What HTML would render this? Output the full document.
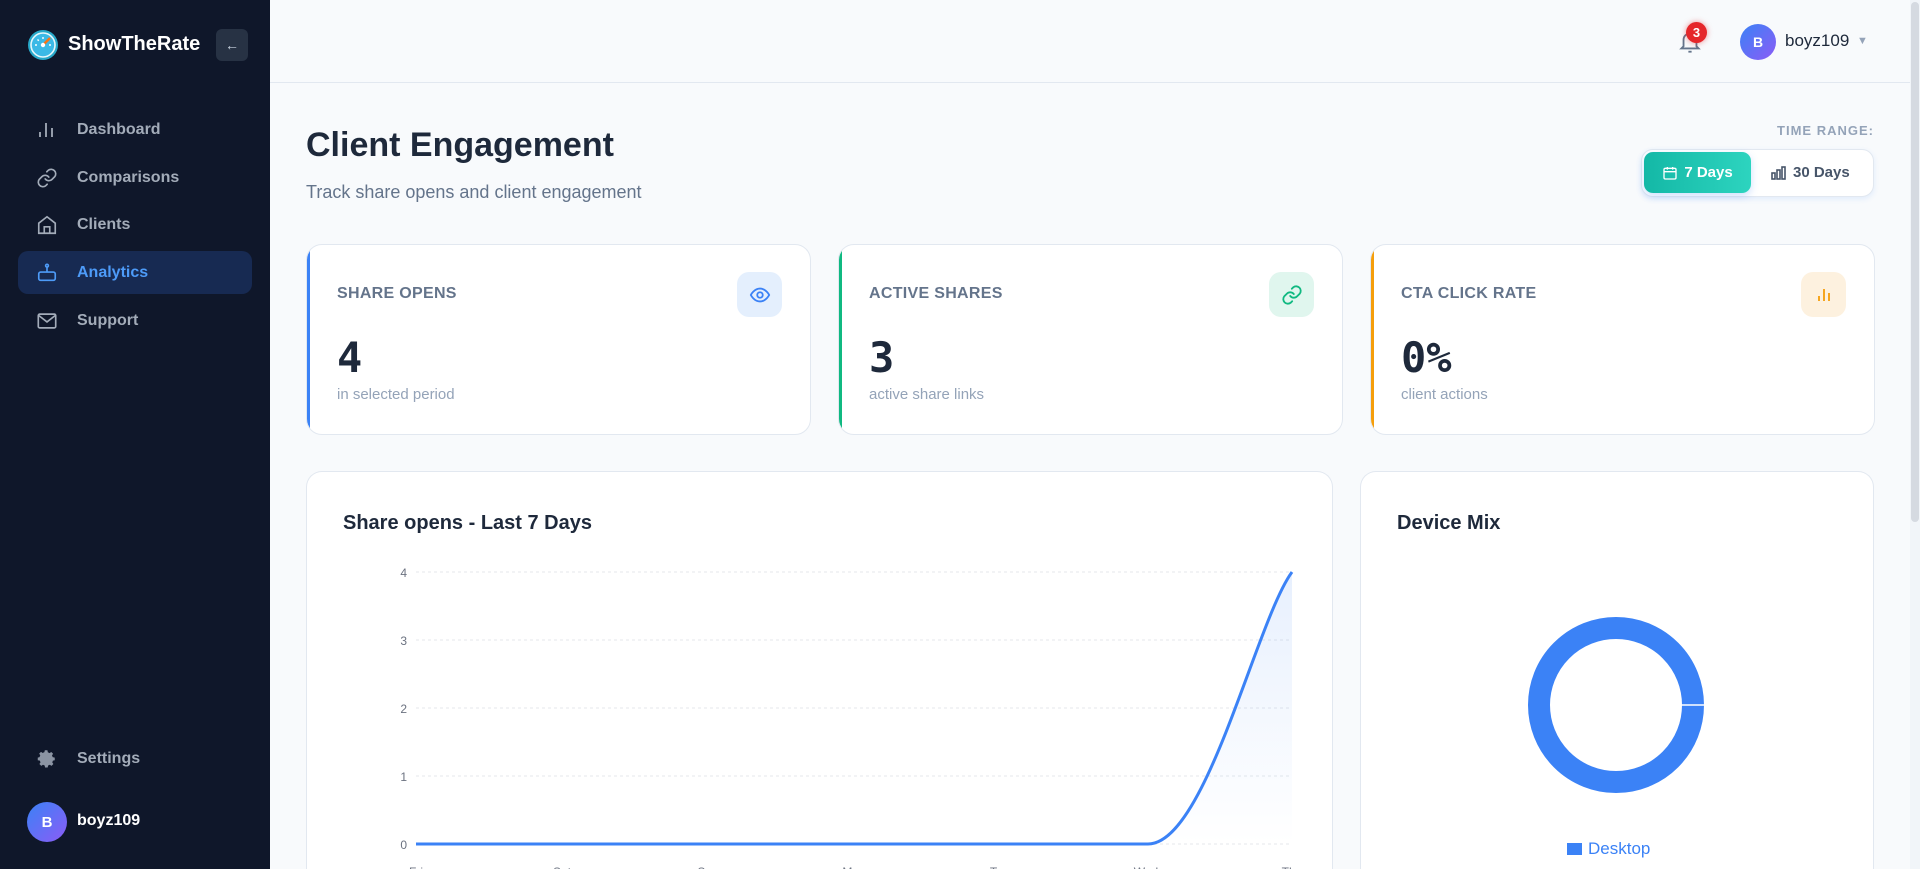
<!DOCTYPE html>
<html style="overflow:hidden;height:869px"><head><meta charset="utf-8"><style>
*{box-sizing:border-box;margin:0;padding:0}
body{width:1920px;height:869px;overflow:hidden;background:#f8fafc;font-family:"Liberation Sans",sans-serif;position:relative}
.sb{position:absolute;left:0;top:0;width:270px;height:869px;background:#0f172a}
.abs{position:absolute}
.nav{position:absolute;left:18px;width:234px;height:43px;border-radius:10px;display:flex;align-items:center;color:#a3acb9;font-size:16px;font-weight:bold}
.nav svg{position:absolute;left:18px}
.nav span{position:absolute;left:59px}
.card{position:absolute;top:244px;height:191px;width:505px;background:#fff;border:1px solid #e2e8f0;border-radius:16px;overflow:hidden}
.card .bar{position:absolute;left:0;top:0;bottom:0;width:3px}
.lbl{position:absolute;left:30px;top:40px;font-size:16px;font-weight:bold;color:#64748b;letter-spacing:.3px}
.num{position:absolute;left:30px;top:88px;font-size:42px;font-weight:bold;color:#1e293b;font-family:"DejaVu Sans Mono","Liberation Mono",monospace}
.sub{position:absolute;left:30px;top:141px;font-size:15px;color:#94a3b8}
.ib{position:absolute;right:28px;top:27px;width:45px;height:45px;border-radius:12px;display:flex;align-items:center;justify-content:center}
</style></head><body>
<div class="sb">
  <svg class="abs" style="left:27px;top:29px" width="32" height="32" viewBox="0 0 32 32"><circle cx="16" cy="16" r="15" fill="#27a8c9"/><circle cx="16" cy="16" r="12" fill="#3bb9e6"/><circle cx="16" cy="16" r="12" fill="none" stroke="#e6f7fb" stroke-width="1.6"/><path d="M16 16 L23 9" stroke="#f97316" stroke-width="2.5"/><circle cx="16" cy="16" r="2.2" fill="#fff"/><path d="M8 16h2M22 16h2M16 8v2M10.5 10.5l1.3 1.3" stroke="#fff" stroke-width="1.4"/></svg>
  <div class="abs" style="left:68px;top:33px;color:#fff;font-size:20px;font-weight:bold">ShowTheRate</div>
  <div class="abs" style="left:216px;top:29px;width:32px;height:32px;border-radius:6px;background:#273244;color:#cbd5e1;font-size:14px;display:flex;align-items:center;justify-content:center">←</div>
  <div class="nav" style="top:108px"><svg width="20" height="20" viewBox="0 0 20 20" fill="none" stroke="#a3acb9" stroke-width="1.8"><path d="M4 17v-5M10 17V3M16 17V8"/></svg><span>Dashboard</span></div>
  <div class="nav" style="top:156px"><svg width="22" height="22" viewBox="0 0 24 24" fill="none" stroke="#a3acb9" stroke-width="1.8" stroke-linecap="round"><path d="M10 13a5 5 0 0 0 7.5.5l3-3a5 5 0 0 0-7-7l-1.7 1.7"/><path d="M14 11a5 5 0 0 0-7.5-.5l-3 3a5 5 0 0 0 7 7l1.7-1.7"/></svg><span>Comparisons</span></div>
  <div class="nav" style="top:203px"><svg width="22" height="22" viewBox="0 0 24 24" fill="none" stroke="#a3acb9" stroke-width="1.8"><path d="M3 10l9-7 9 7v11H3z"/><path d="M9 21v-7h6v7"/></svg><span>Clients</span></div>
  <div class="nav" style="top:251px;background:#172a52;color:#4d9bf8"><svg width="22" height="22" viewBox="0 0 24 24" fill="none" stroke="#4d9bf8" stroke-width="1.8"><rect x="3" y="11" width="18" height="9" rx="2"/><path d="M12 11V5"/><circle cx="12" cy="4" r="1.5"/><path d="M8 15.5h.01M16 15.5h.01"/></svg><span>Analytics</span></div>
  <div class="nav" style="top:299px"><svg width="22" height="22" viewBox="0 0 24 24" fill="none" stroke="#a3acb9" stroke-width="1.8"><rect x="2.5" y="4.5" width="19" height="15" rx="1.5"/><path d="M3 6l9 7 9-7"/></svg><span>Support</span></div>
  <div class="nav" style="top:737px"><svg width="22" height="22" viewBox="0 0 24 24" fill="#8b94a3"><path d="M12 8.5a3.5 3.5 0 1 0 0 7 3.5 3.5 0 0 0 0-7zm9 5v-3l-2.4-.5a7 7 0 0 0-.8-1.9l1.3-2-2.1-2.1-2 1.3a7 7 0 0 0-1.9-.8L12.6 2h-3l-.5 2.4a7 7 0 0 0-1.9.8l-2-1.300-2.1 2.1 1.3 2a7 7 0 0 0-.8 1.9L1.5 10.5v3l2.4.5c.2.7.4 1.3.8 1.9l-1.3 2 2.1 2.1 2-1.3c.6.4 1.2.6 1.9.8l.5 2.4h3l.5-2.4c.7-.2 1.3-.4 1.9-.8l2 1.3 2.1-2.1-1.3-2c.4-.6.6-1.2.8-1.9z" transform="translate(.5 .5) scale(.95)"/></svg><span>Settings</span></div>
  <div class="abs" style="left:27px;top:802px;width:40px;height:40px;border-radius:50%;background:linear-gradient(135deg,#3b82f6,#8b5cf6);color:#fff;font-weight:bold;font-size:15px;display:flex;align-items:center;justify-content:center">B</div>
  <div class="abs" style="left:77px;top:812px;color:#fff;font-size:16px;font-weight:bold">boyz109</div>
</div>
<div class="abs" style="left:270px;top:0;width:1640px;height:83px;border-bottom:1px solid #e2e8f0;background:#f8fafc"></div>
<svg class="abs" style="left:1677px;top:28px" width="26" height="28" viewBox="0 0 24 26" fill="none" stroke="#64748b" stroke-width="1.7"><path d="M6 17V11a6 6 0 0 1 12 0v6l2 2H4z"/><path d="M10.5 22h3"/></svg>
<div class="abs" style="left:1686px;top:22px;width:21px;height:21px;border-radius:50%;background:#e5262a;color:#fff;font-size:13px;font-weight:bold;display:flex;align-items:center;justify-content:center;box-shadow:0 0 6px rgba(229,38,42,.5)">3</div>
<div class="abs" style="left:1740px;top:24px;width:36px;height:36px;border-radius:50%;background:linear-gradient(135deg,#3b82f6,#8b5cf6);color:#fff;font-weight:bold;font-size:14px;display:flex;align-items:center;justify-content:center">B</div>
<div class="abs" style="left:1785px;top:31px;color:#1e293b;font-size:17px">boyz109</div>
<div class="abs" style="left:1857px;top:35px;color:#94a3b8;font-size:11px">▼</div>
<div class="abs" style="left:1910px;top:0;width:10px;height:869px;background:#f1f5f9"></div>
<div class="abs" style="left:1911px;top:2px;width:8px;height:520px;background:#d5dae1;border-radius:4px"></div>

<div class="abs" style="left:306px;top:126px;font-size:34px;font-weight:bold;color:#1e293b">Client Engagement</div>
<div class="abs" style="left:306px;top:182px;font-size:18px;color:#64748b">Track share opens and client engagement</div>
<div class="abs" style="left:1700px;top:123px;width:174px;text-align:right;font-size:13px;font-weight:bold;color:#94a3b8;letter-spacing:1px">TIME RANGE:</div>
<div class="abs" style="left:1641px;top:149px;width:233px;height:48px;background:#fff;border:1px solid #e2e8f0;border-radius:12px;box-shadow:0 2px 6px rgba(59,130,246,.12)"></div>
<div class="abs" style="left:1644px;top:152px;width:107px;height:41px;border-radius:9px;background:linear-gradient(90deg,#14b8a6,#2dd4bf);box-shadow:0 3px 8px rgba(59,130,246,.25);color:#fff;font-weight:bold;font-size:15px;display:flex;align-items:center;justify-content:center;gap:6px"><svg width="16" height="16" viewBox="0 0 24 24" fill="none" stroke="#fff" stroke-width="2"><rect x="3" y="5" width="18" height="16" rx="2"/><path d="M3 10h18M8 3v4M16 3v4"/></svg>7 Days</div>
<div class="abs" style="left:1771px;top:164px;color:#475569;font-weight:bold;font-size:15px;display:flex;align-items:center;gap:6px"><svg width="16" height="14" viewBox="0 0 16 14" fill="none" stroke="#475569" stroke-width="1.6"><rect x="1" y="7" width="3" height="6"/><rect x="6" y="4" width="3" height="9"/><rect x="11" y="1" width="3" height="12"/></svg>30 Days</div>

<div class="card" style="left:306px"><div class="bar" style="background:#3b82f6"></div><div class="lbl">SHARE OPENS</div><div class="ib" style="background:#e4effd"><svg width="22" height="22" viewBox="0 0 24 24" fill="none" stroke="#3b82f6" stroke-width="2"><path d="M2 12s3.5-7 10-7 10 7 10 7-3.5 7-10 7S2 12 2 12z"/><circle cx="12" cy="12" r="3"/></svg></div><div class="num">4</div><div class="sub">in selected period</div></div>
<div class="card" style="left:838px"><div class="bar" style="background:#10b981"></div><div class="lbl">ACTIVE SHARES</div><div class="ib" style="background:#e0f6ee"><svg width="22" height="22" viewBox="0 0 24 24" fill="none" stroke="#10b981" stroke-width="2" stroke-linecap="round"><path d="M10 13a5 5 0 0 0 7.5.5l3-3a5 5 0 0 0-7-7l-1.7 1.7"/><path d="M14 11a5 5 0 0 0-7.5-.5l-3 3a5 5 0 0 0 7 7l1.7-1.7"/></svg></div><div class="num">3</div><div class="sub">active share links</div></div>
<div class="card" style="left:1370px"><div class="bar" style="background:#f59e0b"></div><div class="lbl">CTA CLICK RATE</div><div class="ib" style="background:#fdf1df"><svg width="20" height="20" viewBox="0 0 20 20" fill="none" stroke="#f59e0b" stroke-width="1.8"><path d="M5 16v-5M10 16V4M15 16V8"/></svg></div><div class="num">0%</div><div class="sub">client actions</div></div>

<div class="abs" style="left:306px;top:471px;width:1027px;height:398px;background:#fff;border:1px solid #e2e8f0;border-bottom:none;border-radius:16px 16px 0 0"></div>
<div class="abs" style="left:343px;top:512px;font-size:20px;font-weight:bold;color:#1e293b">Share opens - Last 7 Days</div>
<svg class="abs" style="left:306px;top:471px" width="1027" height="398">
<defs><linearGradient id="g" x1="0" y1="0" x2="0" y2="1"><stop offset="0" stop-color="#3b82f6" stop-opacity=".12"/><stop offset="1" stop-color="#3b82f6" stop-opacity="0"/></linearGradient></defs>
<g stroke="#e5e7eb" stroke-dasharray="3 3"><line x1="110" x2="986" y1="101" y2="101"/><line x1="110" x2="986" y1="169" y2="169"/><line x1="110" x2="986" y1="237" y2="237"/><line x1="110" x2="986" y1="305" y2="305"/><line x1="110" x2="986" y1="373" y2="373"/></g>
<g fill="#6b7280" font-size="12" font-family="Liberation Sans" text-anchor="end"><text x="101" y="106">4</text><text x="101" y="174">3</text><text x="101" y="242">2</text><text x="101" y="310">1</text><text x="101" y="378">0</text></g>
<path d="M842 373 C900 373 950 150 986 101 L986 373 Z" fill="url(#g)"/>
<path d="M110 373 L842 373 C900 373 950 150 986 101" fill="none" stroke="#3b82f6" stroke-width="3"/>
<g fill="#6b7280" font-size="12" font-family="Liberation Sans" text-anchor="middle"><text x="110" y="405">Fri</text><text x="256" y="405">Sat</text><text x="402" y="405">Sun</text><text x="548" y="405">Mon</text><text x="694" y="405">Tue</text><text x="840" y="405">Wed</text><text x="986" y="405">Thu</text></g>
</svg>
<div class="abs" style="left:1360px;top:471px;width:514px;height:398px;background:#fff;border:1px solid #e2e8f0;border-bottom:none;border-radius:16px 16px 0 0"></div>
<div class="abs" style="left:1397px;top:512px;font-size:20px;font-weight:bold;color:#1e293b">Device Mix</div>
<svg class="abs" style="left:1526px;top:615px" width="180" height="180"><circle cx="90" cy="90" r="77" fill="none" stroke="#3b82f6" stroke-width="22"/><line x1="155" y1="90" x2="180" y2="90" stroke="#fff" stroke-width="1.5"/></svg>
<div class="abs" style="left:1567px;top:839px;display:flex;align-items:center;gap:6px;color:#3b82f6;font-size:17px"><span style="display:inline-block;width:15px;height:12px;background:#3b82f6"></span>Desktop</div>
</body></html>
